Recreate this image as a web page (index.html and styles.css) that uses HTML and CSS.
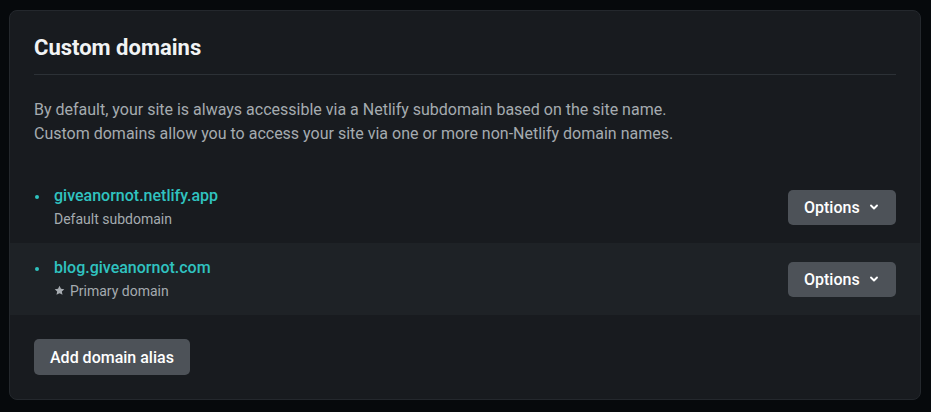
FILE: index.html
```html
<!DOCTYPE html>
<html lang="en">
<head>
<meta charset="utf-8">
<title>Custom domains</title>
<link rel="stylesheet" href="styles.css">
</head>
<body>
<section class="card">
  <header class="card-head">
    <h2 class="card-title">Custom domains</h2>
  </header>
  <p class="intro">By default, your site is always accessible via a Netlify subdomain based on the site name.<br>Custom domains allow you to access your site via one or more non-Netlify domain names.</p>
  <ul class="domains">
    <li class="domain">
      <span class="dot"></span>
      <div class="domain-info">
        <a class="domain-name" href="#">giveanornot.netlify.app</a>
        <span class="domain-note">Default subdomain</span>
      </div>
      <button class="btn btn-options">Options
        <svg class="chev" width="10" height="10" viewBox="0 0 10 10"><path d="M2 3.5 L5 6.5 L8 3.5" fill="none" stroke="#fff" stroke-width="1.9" stroke-linecap="round" stroke-linejoin="round"/></svg>
      </button>
    </li>
    <li class="domain domain-alt">
      <span class="dot"></span>
      <div class="domain-info">
        <a class="domain-name" href="#">blog.giveanornot.com</a>
        <span class="domain-note"><svg class="star" width="11" height="11" viewBox="0 0 24 24"><path d="M12 1.5l3.2 6.9 7.3.8-5.4 5 1.5 7.3L12 17.8l-6.6 3.7 1.5-7.3-5.4-5 7.3-.8z" fill="#a7acb1"/></svg>Primary domain</span>
      </div>
      <button class="btn btn-options">Options
        <svg class="chev" width="10" height="10" viewBox="0 0 10 10"><path d="M2 3.5 L5 6.5 L8 3.5" fill="none" stroke="#fff" stroke-width="1.9" stroke-linecap="round" stroke-linejoin="round"/></svg>
      </button>
    </li>
  </ul>
  <div class="card-foot">
    <button class="btn">Add domain alias</button>
  </div>
</section>
</body>
</html>
```
FILE: styles.css
```css
* { box-sizing: border-box; }
html, body { margin: 0; }
body {
  background: #06090c;
  padding: 10px 10px 12px 9px;
  font-family: Roboto, "Liberation Sans", Arial, sans-serif;
  color: #a5abb0;
}
.card {
  background: #181b1f;
  border: 1px solid #24282d;
  border-radius: 8px;
  height: 390px;
  display: flex;
  flex-direction: column;
}
.card-head {
  margin: 0 24px;
  padding: 23px 0 12px;
  border-bottom: 1px solid #2c3136;
}
.card-title {
  margin: 0;
  font-size: 22px;
  line-height: 28px;
  font-weight: 700;
  color: #f1f3f4;
}
.intro {
  margin: 23px 24px 25px;
  font-size: 16px;
  line-height: 24px;
  color: #a5abb0;
}
.domains {
  list-style: none;
  margin: 0;
  padding: 0;
}
.domain {
  display: flex;
  align-items: center;
  height: 72px;
  padding: 0 24px;
}
.domain-alt { background: #1e2226; }
.dot {
  width: 4px;
  height: 4px;
  border-radius: 50%;
  background: #2fc2bf;
  margin: 0 15px 20px 1px;
  align-self: center;
}
.domain-info {
  flex: 1;
  display: flex;
  flex-direction: column;
}
.domain-name {
  font-size: 16px;
  line-height: 24px;
  font-weight: 500;
  color: #30c3c0;
  text-decoration: none;
}
.domain-note {
  font-size: 14px;
  line-height: 22px;
  color: #a5abb0;
  display: flex;
  align-items: center;
}
.star { margin-right: 5px; margin-top: -1px; }
.btn {
  font-family: Roboto, "Liberation Sans", Arial, sans-serif;
  font-size: 16px;
  font-weight: 500;
  color: #ffffff;
  background: #4d5258;
  border: 0;
  border-radius: 5px;
  height: 36px;
  padding: 0 16px;
  display: inline-flex;
  align-items: center;
}
.btn-options {
  height: 35px;
  width: 108px;
}
.chev { margin-left: 9px; }
.card-foot {
  padding: 24px 24px 0;
}
```
